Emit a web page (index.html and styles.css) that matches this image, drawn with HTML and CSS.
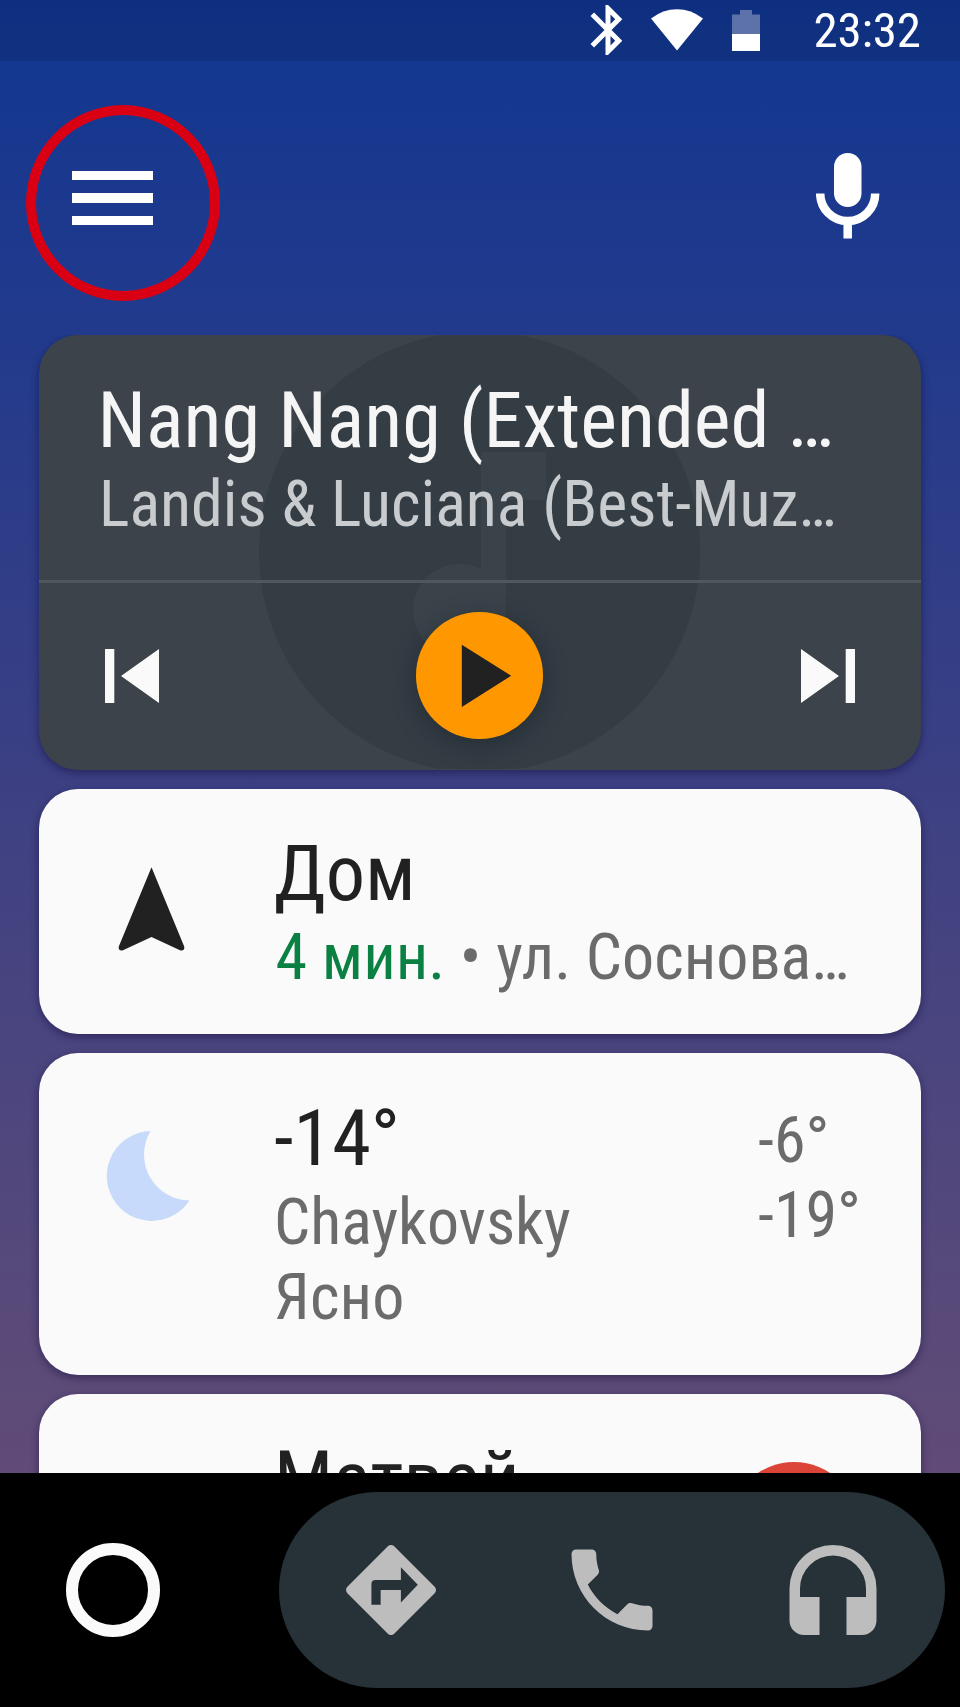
FILE: index.html
```html
<!DOCTYPE html>
<html lang="ru">
<head>
<meta charset="utf-8">
<title>Android Auto</title>
<link rel="stylesheet" href="styles.css">
</head>
<body>
<div class="screen">
  <header class="status">
    <svg class="st-bt" viewBox="0 0 24 24"><path d="M17.71 7.71L12 2h-1v7.59L6.41 5 5 6.41 10.59 12 5 17.59 6.41 19 11 14.41V22h1l5.71-5.71-4.3-4.29 4.3-4.29zM13 5.83l1.88 1.88L13 9.59V5.83zm1.88 10.46L13 18.17v-3.76l1.88 1.88z"/></svg>
    <svg class="st-wifi" viewBox="0 0 52 42"><path d="M0 9.500Q12 .3 26 .3T52 9.500L26 41.500z"/></svg>
    <svg class="st-bat" viewBox="0 0 28 42"><path opacity=".32" d="M8 0h12v4.500h8V24H0V4.500h8z"/><path d="M0 24h28v17H0z"/></svg>
    <span class="clock">23:32</span>
  </header>
  <div class="toolbar">
    <div class="menu"><i></i><i></i><i></i><span class="ring"></span></div>
    <svg class="mic" viewBox="0 0 64 86"><rect x="18" y="0" width="27.500" height="54" rx="13.750"/><path d="M4.200 40.500a27.500 27.500 0 0 0 55 0M31.700 68v17.500" fill="none" stroke="#fff" stroke-width="8.500"/></svg>
  </div>
  <main class="cards">
    <section class="card media">
      <svg class="art" viewBox="0 0 882 434"><circle cx="440.500" cy="217" r="220.500" fill="#343c44"/><path fill="#3a434a" d="M442 117h65v48h-40v110a46.500 46.500 0 1 1-25-41z"/></svg>
      <div class="media-info">
        <div class="title">Nang Nang (Extended …</div>
        <div class="sub">Landis &amp; Luciana (Best-Muz…</div>
      </div>
      <div class="controls">
        <svg class="skip" viewBox="0 0 54 54"><path d="M0 0h9.300v54H0zM54 0v54L16 27z"/></svg>
        <div class="play"><svg viewBox="0 0 127 127"><path fill="#212121" d="M46 33v62.500L95.500 64z"/></svg></div>
        <svg class="skip" viewBox="0 0 54 54"><path d="M0 0v54l38-27zM44.700 0H54v54h-9.300z"/></svg>
      </div>
    </section>
    <section class="card nav-card">
      <svg class="lead arrow" viewBox="0 0 68 86"><path d="M34 0L67.200 80.500Q68 85 63.500 84.500L34 71 4.500 84.500Q0 85 .8 80.500z" fill="#212121"/></svg>
      <div class="body">
        <div class="title">Дом</div>
        <div class="sub"><b>4 мин.</b> • ул. Соснова…</div>
      </div>
    </section>
    <section class="card weather">
      <svg class="lead moon" viewBox="0 0 82 90"><path d="M42.500 0A45 45 0 1 0 81.500 69.500A46 46 0 0 1 42.500 0z" fill="#c8dafb"/></svg>
      <div class="body">
        <div class="title">-14°</div>
        <div class="sub">Chaykovsky</div>
        <div class="sub">Ясно</div>
      </div>
      <div class="range">
        <div class="sub">-6°</div>
        <div class="sub">-19°</div>
      </div>
    </section>
    <section class="card contact">
      <div class="body"><div class="title">Матвей</div></div>
      <div class="badge"></div>
    </section>
  </main>
  <nav class="bottom">
    <div class="home"></div>
    <div class="pill">
      <svg viewBox="0 0 24 24"><path fill-rule="evenodd" d="M21.710 11.290l-9-9c-.39-.39-1.020-.39-1.410 0l-9 9c-.39.39-.39 1.020 0 1.410l9 9c.39.39 1.020.39 1.410 0l9-9c.39-.38.39-1.010 0-1.410zM14.200 14.800V12H9.700v3.300H7.650V10.700q0-.9.900-.9h5.650V6.950l3.750 3.900z"/></svg>
      <svg viewBox="0 0 24 24"><path d="M6.620 10.790c1.440 2.830 3.760 5.140 6.590 6.590l2.200-2.200c.27-.27.67-.36 1.020-.24 1.120.37 2.330.57 3.570.57.55 0 1 .45 1 1V20c0 .55-.45 1-1 1-9.390 0-17-7.610-17-17 0-.55.45-1 1-1h3.500c.55 0 1 .45 1 1 0 1.250.2 2.450.57 3.570.11.35.03.74-.25 1.020l-2.200 2.200z"/></svg>
      <svg viewBox="0 0 108 108"><path d="M10.500 52.500a43.500 43.500 0 0 1 87 0V84.500a14.500 14.500 0 0 1-14.500 14.500H67.500V61H87v-8.500a33 33 0 0 0-66 0V61H40.500V99H25a14.500 14.500 0 0 1-14.500-14.500z"/></svg>
    </div>
  </nav>
</div>
</body>
</html>
```
FILE: styles.css
```css
* { box-sizing: border-box; }
body { margin: 0; }
.screen {
  width: 960px; height: 1707px; overflow: hidden;
  display: flex; flex-direction: column;
  font-family: "Roboto Condensed", Roboto, sans-serif;
  font-stretch: 75%;
  background: linear-gradient(180deg, #103590 0, #143790 61px, #223a8c 335px, #3c4083 780px, #4a457f 1040px, #5d4b78 1400px, #614a77 1473px);
}
svg { display: block; flex: none; fill: #fff; }
.status {
  height: 61px; flex: none; display: flex; align-items: flex-start;
  background: rgba(0, 0, 0, .11); color: #fff;
}
.st-bt { width: 60px; height: 60px; margin-left: 578px; }
.st-wifi { width: 52px; height: 42px; margin: 9px 0 0 12.500px; }
.st-bat { width: 28px; height: 42px; margin: 10px 0 0 29px; }
.clock { margin-left: 54px; font-size: 49px; line-height: 61px; letter-spacing: -.2px; white-space: nowrap; }
.toolbar {
  height: 274px; flex: none; display: flex; align-items: flex-start;
  justify-content: space-between; padding: 92px 80.500px 0 72px;
}
.menu {
  position: relative; width: 81px; margin-top: 17.500px;
  display: flex; flex-direction: column; gap: 13px;
}
.menu i { height: 9.500px; background: #fff; }
.ring {
  position: absolute; left: -46px; top: -66px; width: 194px; height: 196px;
  border: 10px solid #da0014; border-radius: 50%;
}
.mic { width: 64px; height: 86px; }
.cards {
  flex: 1; min-height: 0; overflow: hidden; padding: 0 39px;
  display: flex; flex-direction: column; gap: 19px;
}
.card {
  flex: none; display: flex; align-items: flex-start; width: 882px;
  background: #fafafa; border-radius: 39px; color: #212121;
  box-shadow: 0 3px 8px rgba(10, 5, 50, .45);
}
.title { font-size: 78.400px; line-height: 94px; height: 94px; white-space: nowrap; }
.sub { font-size: 64px; line-height: 75px; height: 75px; white-space: nowrap; color: #6b6b6b; }
.sub b { font-weight: 400; color: #0b8043; }
.media {
  position: relative; height: 434.500px; overflow: hidden;
  flex-direction: column; align-items: stretch; background: #3c434a;
}
.art { position: absolute; left: 0; top: 0; width: 882px; height: 434px; }
.media-info { position: relative; height: 245px; padding: 38px 0 0 60px; color: #f5f5f5; }
.media-info .title { margin-left: -1.500px; }
.media-info .sub { color: #c9cccf; }
.controls {
  position: relative; height: 190px; border-top: 3px solid #50585d;
  display: flex; justify-content: space-between; align-items: center; padding: 0 66px 1px;
}
.skip { width: 54px; height: 54px; fill: #fafafa; }
.play {
  width: 126.500px; height: 126.500px; margin-right: 1.500px; border-radius: 50%; background: #ff9800;
  box-shadow: 0 6px 24px rgba(10, 20, 25, .35);
}
.nav-card { height: 245.500px; padding: 37px 0 0; }
.lead { margin-left: 79px; }
.arrow { width: 67px; height: 85px; margin-top: 41px; }
.body { margin-left: 90.500px; }
.nav-card .title { margin-left: -1.500px; line-height: 95px; }
.weather { height: 322px; padding-top: 38px; }
.moon { width: 82px; height: 90px; margin: 40px 0 0 68.500px; overflow: visible; }
.weather .body { margin-left: 84.500px; width: 484px; }
.range { padding-top: 12px; }
.contact { height: 245px; padding-top: 38px; }
.contact .body { margin-left: 235px; width: 455px; }
.badge { width: 130px; height: 130px; margin-top: 30px; border-radius: 50%; background: #db4437; }
.bottom {
  height: 234.500px; flex: none; background: #000;
  display: flex; align-items: center; padding-left: 66px;
}
.home { width: 94px; height: 94px; border: 12.500px solid #fafafa; border-radius: 50%; }
.pill {
  margin-left: 119px; width: 666px; height: 196px; border-radius: 98px; background: #263238;
  display: flex; align-items: center; justify-content: space-around; padding: 0 2px;
}
.pill svg { width: 108px; height: 108px; fill: #bdbdbd; }
```
